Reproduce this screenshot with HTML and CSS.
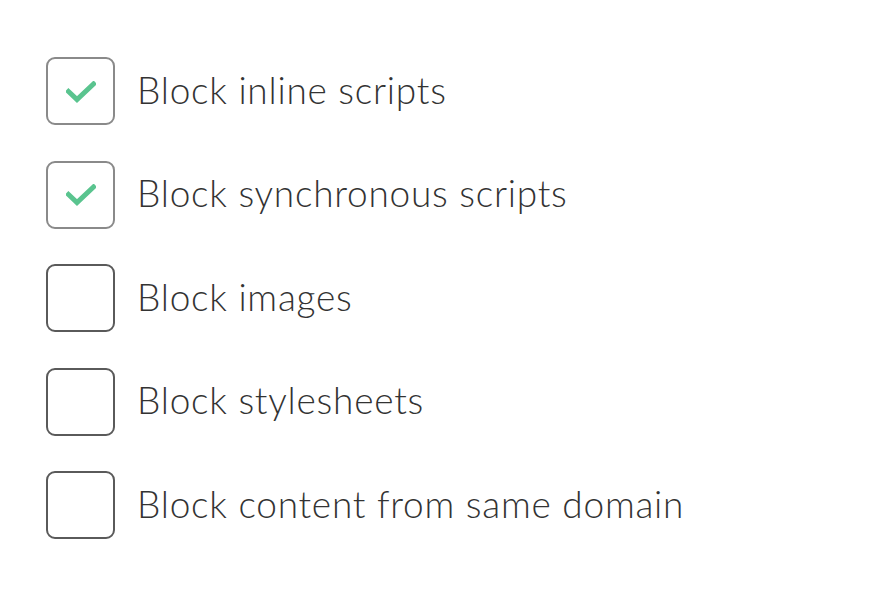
FILE: index.html
```html
<!DOCTYPE html>
<html lang="en">
<head>
<meta charset="utf-8">
<title>Blocking options</title>
<link rel="stylesheet" href="styles.css">
</head>
<body>
<ul class="options">
  <li class="option">
    <span class="box box--checked">
      <svg class="tick" viewBox="0 0 30 22" aria-hidden="true"><path d="M2.5 10.5 L11 18.5 L27.5 3"/></svg>
    </span>
    <span class="label">Block inline scripts</span>
  </li>
  <li class="option">
    <span class="box box--checked">
      <svg class="tick" viewBox="0 0 30 22" aria-hidden="true"><path d="M2.5 10.5 L11 18.5 L27.5 3"/></svg>
    </span>
    <span class="label">Block synchronous scripts</span>
  </li>
  <li class="option">
    <span class="box"></span>
    <span class="label">Block images</span>
  </li>
  <li class="option">
    <span class="box"></span>
    <span class="label">Block stylesheets</span>
  </li>
  <li class="option">
    <span class="box"></span>
    <span class="label">Block content from same domain</span>
  </li>
</ul>
</body>
</html>
```
FILE: styles.css
```css
html, body {
  margin: 0;
  background: #ffffff;
}

.options {
  list-style: none;
  margin: 0;
  padding: 57px 0 0 46px;
  display: flex;
  flex-direction: column;
  gap: 35.5px;
}

.option {
  display: flex;
  align-items: center;
  gap: 22px;
  height: 68px;
}

.box {
  box-sizing: border-box;
  width: 69px;
  height: 68px;
  flex: none;
  border: 2.5px solid #5a5a5a;
  border-radius: 9px;
  display: flex;
  align-items: center;
  justify-content: center;
}

.box--checked {
  border-color: #8a8a8a;
}

.tick {
  width: 30px;
  height: 22px;
  margin-top: 1px;
}

.tick path {
  fill: none;
  stroke: #5ac48f;
  stroke-width: 5;
  stroke-linecap: square;
  stroke-linejoin: miter;
}

.label {
  font-family: "Lato", "Noto Sans", sans-serif;
  font-weight: 300;
  font-size: 37px;
  color: #333333;
  letter-spacing: 0.75px;
  line-height: 1;
  margin-top: -4px;
}
```
